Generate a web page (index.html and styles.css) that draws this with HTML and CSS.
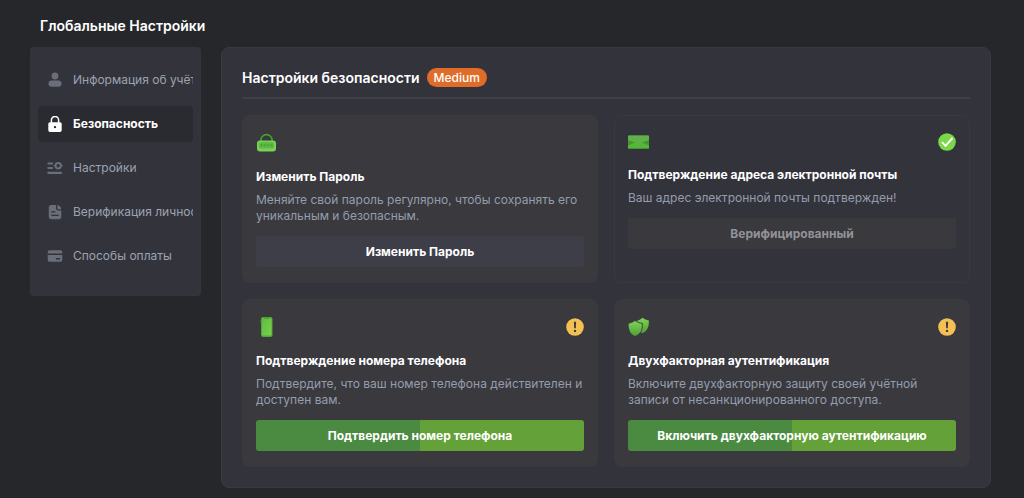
FILE: index.html
```html
<!DOCTYPE html>
<html lang="ru">
<head>
<meta charset="utf-8">
<meta name="viewport" content="width=device-width, initial-scale=1">
<title>Глобальные Настройки</title>
<link rel="stylesheet" href="styles.css">
</head>
<body>
<div class="page">
  <h1 class="page-title">Глобальные Настройки</h1>
  <div class="layout">
    <nav class="sidebar" aria-label="Настройки">
      <a class="nav-item" href="#account">
        <svg class="nav-icon" viewBox="0 0 16 16" aria-hidden="true"><circle cx="8" cy="4" r="3.4"/><rect x="1.5" y="8.4" width="13" height="6.4" rx="3.2"/></svg>
        <span class="nav-label">Информация об учётной</span>
      </a>
      <a class="nav-item nav-item-active" href="#security" aria-current="page">
        <svg class="nav-icon" viewBox="0 0 16 16" aria-hidden="true"><path d="M4.400 7V4a3.600 3.600 0 0 1 7.200 0V7" fill="none" stroke="currentColor" stroke-width="1.500"/><path fill-rule="evenodd" d="M3 6.200h10A1.700 1.700 0 0 1 14.700 8v6.200A1.800 1.800 0 0 1 13 16H3a1.800 1.800 0 0 1-1.700-1.800V8A1.700 1.700 0 0 1 3 6.200ZM8 9.900a1.200 1.200 0 1 0 0 2.400 1.200 1.200 0 0 0 0-2.400Z"/></svg>
        <span class="nav-label">Безопасность</span>
      </a>
      <a class="nav-item" href="#preferences">
        <svg class="nav-icon" viewBox="0 0 16 16" aria-hidden="true"><rect x=".5" y="2.500" width="5.500" height="2" rx=".6"/><rect x=".5" y="7" width="5.500" height="2" rx=".6"/><rect x=".5" y="11.700" width="14.500" height="2.200" rx=".6"/><circle cx="11.200" cy="5.700" r="2.700" fill="none" stroke="currentColor" stroke-width="1.900"/><path d="M6.900 4.900h1.500v1.600H6.900ZM14 4.900h1.500v1.600H14Z"/></svg>
        <span class="nav-label">Настройки</span>
      </a>
      <a class="nav-item" href="#verification">
        <svg class="nav-icon" viewBox="0 0 16 16" aria-hidden="true"><path fill-rule="evenodd" d="M4.500 1H9v3.200A2.300 2.300 0 0 0 11.300 6.500H14.300v6A2.700 2.700 0 0 1 11.600 15.200H4.500a2.700 2.700 0 0 1-2.700-2.700V3.700A2.700 2.700 0 0 1 4.500 1ZM4.300 7.200v1.300h4V7.200ZM4.300 10.800v1.300h7.400v-1.300Z"/><path d="M10.300 1c2 .3 3.600 1.900 4 4.200h-2.800a1.200 1.200 0 0 1-1.200-1.200Z"/></svg>
        <span class="nav-label">Верификация личности</span>
      </a>
      <a class="nav-item" href="#payments">
        <svg class="nav-icon" viewBox="0 0 16 16" aria-hidden="true"><path d="M2.600 2.200h10.800A1.900 1.900 0 0 1 15.300 4.200v1.300H.7V4.200A1.900 1.900 0 0 1 2.600 2.200Z"/><path fill-rule="evenodd" d="M.7 7h14.600v4.800a1.900 1.900 0 0 1-1.900 2H2.600a1.900 1.900 0 0 1-1.900-2ZM9 10.100v1.500h4v-1.500Z"/></svg>
        <span class="nav-label">Способы оплаты</span>
      </a>
    </nav>

    <main class="panel">
      <header class="panel-head">
        <h2 class="panel-title">Настройки безопасности</h2>
        <span class="badge">Medium</span>
      </header>

      <div class="cards">
        <section class="card">
          <div class="card-head">
            <svg class="card-icon" viewBox="0 0 20 20" aria-hidden="true"><path d="M4.400 9V7.200a5.600 5.600 0 0 1 11.200 0V9" fill="none" stroke="#43a52d" stroke-width="1.600"/><rect x=".5" y="7.500" width="19" height="11" rx="3" fill="#78d354"/><rect x="2.400" y="9" width="15.200" height="6.500" rx="2" fill="#5fb947"/><path d="M4 12.200h12" stroke="#4fa53b" stroke-width="2.200" stroke-dasharray="2 1.300"/></svg>
          </div>
          <h3 class="card-title">Изменить Пароль</h3>
          <p class="card-text">Меняйте свой пароль регулярно, чтобы сохранять его уникальным и безопасным.</p>
          <button class="btn btn-neutral" type="button">Изменить Пароль</button>
        </section>

        <section class="card card-done">
          <div class="card-head">
            <svg class="card-icon" viewBox="0 0 21 20" aria-hidden="true"><rect y="3.500" width="21" height="13" rx="1" fill="#43982e"/><path d="M0 16.500V13.500L8 10h5l8 3.500v3Z" fill="#55b738"/><path d="M0 4.500a1 1 0 0 1 1-1h19a1 1 0 0 1 1 1V8l-8.500 3a6 6 0 0 1-4 0L0 8Z" fill="#62b04a"/></svg>
            <svg class="status" viewBox="0 0 18 18" role="img" aria-label="Подтверждено"><circle cx="9" cy="9" r="8.800" fill="#7bd849"/><path d="m4 9.200 3.500 3.600 7-7.800" fill="none" stroke="#fff" stroke-width="1.900"/></svg>
          </div>
          <h3 class="card-title">Подтверждение адреса электронной почты</h3>
          <p class="card-text">Ваш адрес электронной почты подтвержден!</p>
          <button class="btn btn-disabled" type="button" disabled>Верифицированный</button>
        </section>

        <section class="card">
          <div class="card-head">
            <svg class="card-icon" viewBox="0 0 20 20" aria-hidden="true"><defs><linearGradient id="phone" x2="1" y2="1"><stop stop-color="#62ba42"/><stop offset="1" stop-color="#76d34e"/></linearGradient></defs><rect x="4.500" width="11.500" height="20" rx="2" fill="#50a936"/><rect x="5.500" y="1" width="9.500" height="17.500" rx="1" fill="url(#phone)"/><path d="M8 .8h5v1H8ZM4 3h1v3H4Z" fill="#43942e"/></svg>
            <svg class="status" viewBox="0 0 18 18" role="img" aria-label="Требуется действие"><circle cx="9" cy="9" r="8.800" fill="#f5c053"/><path d="M7.900 3.800h2.200l-.3 6.500H8.200Z" fill="#393a3e"/><circle cx="9" cy="12.900" r="1.200" fill="#393a3e"/></svg>
          </div>
          <h3 class="card-title">Подтверждение номера телефона</h3>
          <p class="card-text">Подтвердите, что ваш номер телефона действителен и доступен вам.</p>
          <button class="btn btn-primary" type="button">Подтвердить номер телефона</button>
        </section>

        <section class="card">
          <div class="card-head">
            <svg class="card-icon" viewBox="0 0 21 20" aria-hidden="true"><defs><linearGradient id="shield" x2="0" y2="1"><stop stop-color="#7ed554"/><stop offset="1" stop-color="#529e37"/></linearGradient></defs><path d="M14.500.8c2 1.500 3.800 2.300 6.300 2.700.3 5.600-.8 10.300-6.500 12.700-4.100-2-6-6-5.900-12.200 2.500-.7 4.300-1.600 6.100-3.200Z" fill="url(#shield)"/><path d="M7 3.500c2.300 1.700 4.300 2.500 7.300 2.800.4 6.400-1.200 10.700-7.300 13.200C1.200 17 .1 12.300.1 6.300 2.800 5.800 4.900 5 7 3.500Z" fill="url(#shield)" stroke="#39383e" stroke-width=".9"/></svg>
            <svg class="status" viewBox="0 0 18 18" role="img" aria-label="Требуется действие"><circle cx="9" cy="9" r="8.800" fill="#f5c053"/><path d="M7.900 3.800h2.200l-.3 6.500H8.200Z" fill="#393a3e"/><circle cx="9" cy="12.900" r="1.200" fill="#393a3e"/></svg>
          </div>
          <h3 class="card-title">Двухфакторная аутентификация</h3>
          <p class="card-text">Включите двухфакторную защиту своей учётной записи от несанкционированного доступа.</p>
          <button class="btn btn-primary" type="button">Включить двухфакторную аутентификацию</button>
        </section>
      </div>
    </main>
  </div>
</div>
</body>
</html>
```
FILE: styles.css
```css
* {
  box-sizing: border-box;
}

body {
  margin: 0;
  background: #26272b;
  color: #fff;
  font-family: Inter, "Liberation Sans", sans-serif;
  font-size: 12px;
  line-height: 16px;
}

h1,
h2,
h3,
p {
  margin: 0;
}

.page {
  padding: 16px 33px 8px 30px;
}

.page-title {
  padding-left: 10px;
  font-size: 14px;
  line-height: 20px;
  font-weight: 600;
}

.layout {
  display: flex;
  align-items: flex-start;
  gap: 20px;
  margin-top: 11px;
}

.sidebar {
  display: flex;
  flex-direction: column;
  flex: none;
  gap: 8px;
  width: 171px;
  padding: 15px 8px 22px;
  border-radius: 4px;
  background: #33333c;
}

.nav-item {
  display: flex;
  align-items: center;
  gap: 10px;
  height: 36px;
  padding-left: 9px;
  border-radius: 4px;
  color: #9ba3b1;
  text-decoration: none;
}

.nav-item-active {
  background: #2a2a31;
  color: #fff;
  font-weight: 700;
}

.nav-icon {
  flex: none;
  width: 16px;
  height: 16px;
  color: #6a6e78;
  fill: currentColor;
}

.nav-item-active .nav-icon {
  color: #fff;
}

.nav-label {
  overflow: hidden;
  white-space: nowrap;
}

.panel {
  flex: 1;
  min-width: 0;
  padding: 20px;
  border: 1px solid #393943;
  border-radius: 8px;
  background: #33333c;
}

.panel-head {
  display: flex;
  align-items: center;
  gap: 7px;
  padding-bottom: 10px;
  border-bottom: 2px solid #3f3f48;
}

.panel-title {
  font-size: 14px;
  line-height: 19px;
  font-weight: 600;
}

.badge {
  padding: 0 7px;
  border-radius: 10px;
  background: #df6c29;
  line-height: 19px;
  font-weight: 500;
}

.cards {
  display: grid;
  grid-template-columns: repeat(2, minmax(0, 1fr));
  gap: 16px;
  margin-top: 16px;
}

.card {
  display: flex;
  flex-direction: column;
  padding: 16px 14px;
  border-radius: 8px;
  background: #39393e;
}

.card-done {
  padding: 15px 13px;
  border: 1px solid #393940;
  background: transparent;
}

.card-head {
  display: flex;
  align-items: center;
  justify-content: space-between;
  height: 24px;
}

.card-done .card-head {
  height: 22px;
}

.card-icon {
  width: 21px;
  height: 20px;
}

.status {
  width: 18px;
  height: 18px;
}

.card-title {
  margin-top: 14px;
  font-size: 12px;
  font-weight: 700;
}

.card-text {
  margin-top: 7px;
  color: #959dac;
}

.btn {
  height: 31px;
  margin-top: 12px;
  padding: 0 12px;
  border: 0;
  border-radius: 3px;
  color: #fff;
  font: inherit;
  font-weight: 700;
}

.btn-neutral {
  background: #3e3e48;
}

.btn-disabled {
  background: #39393e;
  color: #929297;
}

.btn-primary {
  background: linear-gradient(90deg, #4b8b41 50%, #64a138 50%);
}
```
